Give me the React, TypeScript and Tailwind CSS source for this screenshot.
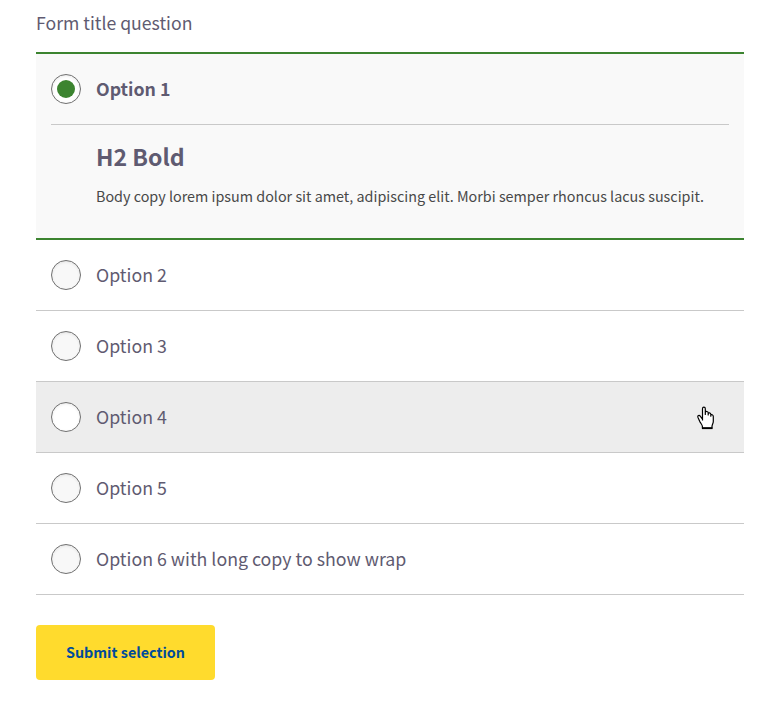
import React, { useState } from "react";

const options = [
  "Option 1",
  "Option 2",
  "Option 3",
  "Option 4",
  "Option 5",
  "Option 6 with long copy to show wrap",
];

function Radio({ checked, hovered }: { checked: boolean; hovered: boolean }) {
  return (
    <span
      className={`flex size-[30px] shrink-0 items-center justify-center rounded-full border border-[#707070] shadow-[inset_0_1px_3px_rgba(0,0,0,0.09)] ${
        checked || hovered ? "bg-white" : "bg-[#f8f8f8]"
      }`}
    >
      {checked && <span className="size-[18px] rounded-full bg-[#3c8430]" />}
    </span>
  );
}

function HandCursor() {
  return (
    <svg width="18" height="24" viewBox="0 0 18 24" className="mr-[29px] mt-[2px] shrink-0">
      <path
        d="M5.5 14.5V2.7C5.5 .7 8.3 .7 8.3 2.7V8.5V6.4C8.5 5 11 5.2 11.2 6.8V9V7.6C11.6 6.3 13.6 6.7 13.8 8.2V10.2V9.2C14.3 8.1 16.3 8.7 16.3 10.5V15.5C16.3 17.5 15 18.5 15 20.5V22.2H5.4V20.5C5.4 18.8 3.8 17.5 2.8 15.5L1 11.5C.3 9.5 2.2 8.7 3.4 10.4L5.5 13.2"
        fill="#fff"
        stroke="#000"
        strokeWidth="1.2"
        strokeLinejoin="round"
      />
      <path d="M5 22.2H15.4" stroke="#000" strokeWidth="1.8" />
    </svg>
  );
}

export default function App() {
  const [selected, setSelected] = useState(0);
  const hovered = 3;

  return (
    <form
      className="h-[721px] bg-white pl-[36px] pr-[25px] font-['Noto_Sans_CJK_SC',sans-serif] text-[#5f5b71]"
      onSubmit={(e) => e.preventDefault()}
    >
      <h1 className="h-[52px] pt-[9px] text-[17.65px] leading-[28px]">Form title question</h1>
      <div role="radiogroup">
        {options.map((label, i) => {
          const checked = i === selected;
          return (
            <div
              key={label}
              className={
                checked
                  ? "h-[188px] border-y-2 border-[#3c8430] bg-[#f9f9f9]"
                  : `h-[71px] border-b border-[#c9c9c9] ${i === hovered ? "bg-[#ededed]" : ""}`
              }
            >
              <div
                role="radio"
                aria-checked={checked}
                onClick={() => setSelected(i)}
                className="flex h-[70px] items-center pl-[15px]"
              >
                <Radio checked={checked} hovered={i === hovered} />
                <span
                  className={`mb-[2px] ml-[15px] flex-1 text-[17.75px] leading-[28px] ${checked ? "font-bold" : ""}`}
                >
                  {label}
                </span>
                {i === hovered && <HandCursor />}
              </div>
              {checked && (
                <div className="mx-[15px] border-t border-[#c9c9c9] pl-[45px]">
                  <h2 className="mt-[14px] text-[23.1px] font-bold leading-[34px]">H2 Bold</h2>
                  <p className="mt-[11px] whitespace-nowrap text-[14.35px] leading-[24px] text-[#484848]">
                    Body copy lorem ipsum dolor sit amet, adipiscing elit. Morbi semper rhoncus
                    lacus suscipit.
                  </p>
                </div>
              )}
            </div>
          );
        })}
      </div>
      <button className="mt-[30px] h-[55px] w-[179px] rounded-[4px] bg-[#ffdb2d] pb-[2px] text-[14.35px] font-bold leading-[24px] text-[#004b9b]">
        Submit selection
      </button>
    </form>
  );
}
